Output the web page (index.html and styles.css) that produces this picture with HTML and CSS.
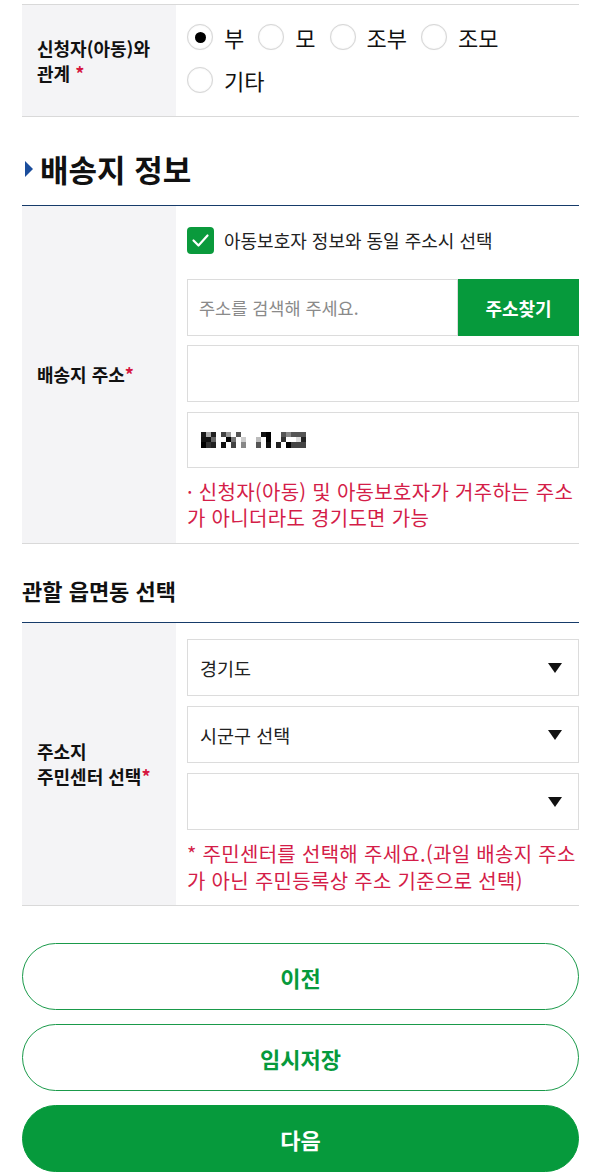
FILE: index.html
```html
<!DOCTYPE html>
<html lang="ko">
<head>
<meta charset="utf-8">
<title>배송지 정보</title>
<link rel="stylesheet" href="styles.css">
</head>
<body>
<div class="page">
  <div class="table table-top">
    <div class="row">
      <div class="th"><span class="th-text">신청자(아동)와<br>관계 <span class="req">*</span></span></div>
      <div class="td radios">
        <label class="radio"><span class="circle checked"></span>부</label>
        <label class="radio"><span class="circle"></span>모</label>
        <label class="radio"><span class="circle"></span>조부</label>
        <label class="radio"><span class="circle"></span>조모</label>
        <label class="radio"><span class="circle"></span>기타</label>
      </div>
    </div>
  </div>

  <h2 class="sec-title"><span class="tri"></span>배송지 정보</h2>

  <div class="table table-navy">
    <div class="row">
      <div class="th"><span class="th-text">배송지 주소<span class="req">*</span></span></div>
      <div class="td addr">
        <label class="check">
          <span class="box"><svg width="27" height="27" viewBox="0 0 27 27"><path d="M6.5 13.5 L11.5 18.5 L20.5 8.5" fill="none" stroke="#fff" stroke-width="2.2" stroke-linecap="round" stroke-linejoin="round"/></svg></span>
          아동보호자 정보와 동일 주소시 선택
        </label>
        <div class="search">
          <div class="field placeholder">주소를 검색해 주세요.</div>
          <div class="search-btn">주소찾기</div>
        </div>
        <div class="field"></div>
        <div class="field masked">
          <svg class="mosaic" width="106" height="16" viewBox="0 0 106 16">
            <rect x="0" y="0" width="5" height="5" fill="#1a1a1a"/><rect x="5" y="0" width="5" height="5" fill="#aaa"/><rect x="10" y="0" width="5" height="5" fill="#222"/>
            <rect x="20" y="0" width="5" height="5" fill="#444"/><rect x="25" y="0" width="5" height="5" fill="#999"/><rect x="35" y="0" width="5" height="5" fill="#555"/>
            <rect x="0" y="5" width="10" height="5" fill="#111"/><rect x="10" y="5" width="5" height="5" fill="#666"/><rect x="25" y="5" width="5" height="5" fill="#000"/>
            <rect x="30" y="5" width="5" height="5" fill="#777"/><rect x="40" y="5" width="5" height="5" fill="#ccc"/>
            <rect x="0" y="10" width="5" height="6" fill="#000"/><rect x="5" y="10" width="5" height="6" fill="#333"/><rect x="10" y="10" width="5" height="6" fill="#222"/>
            <rect x="20" y="10" width="5" height="6" fill="#111"/><rect x="30" y="10" width="5" height="6" fill="#444"/><rect x="40" y="10" width="5" height="6" fill="#888"/>
            <rect x="60" y="0" width="5" height="5" fill="#111"/><rect x="65" y="0" width="5" height="5" fill="#000"/><rect x="80" y="0" width="5" height="5" fill="#555"/><rect x="85" y="0" width="5" height="5" fill="#888"/><rect x="90" y="0" width="15" height="5" fill="#555"/>
            <rect x="55" y="5" width="5" height="5" fill="#bbb"/><rect x="65" y="5" width="5" height="5" fill="#000"/><rect x="80" y="5" width="5" height="5" fill="#333"/><rect x="95" y="5" width="5" height="5" fill="#ddd"/><rect x="100" y="5" width="5" height="5" fill="#222"/>
            <rect x="55" y="10" width="5" height="6" fill="#555"/><rect x="65" y="10" width="5" height="6" fill="#111"/><rect x="75" y="10" width="5" height="6" fill="#222"/><rect x="85" y="10" width="5" height="6" fill="#000"/><rect x="90" y="10" width="15" height="6" fill="#444"/>
          </svg>
        </div>
        <p class="note">· 신청자(아동) 및 아동보호자가 거주하는 주소가 아니더라도 경기도면 가능</p>
      </div>
    </div>
  </div>

  <h3 class="sub-title">관할 읍면동 선택</h3>

  <div class="table table-navy">
    <div class="row">
      <div class="th"><span class="th-text">주소지<br>주민센터 선택<span class="req">*</span></span></div>
      <div class="td selects">
        <div class="select"><span>경기도</span><svg width="14" height="10" viewBox="0 0 14 10"><path d="M0 0 H14 L7 10 Z" fill="#111"/></svg></div>
        <div class="select"><span>시군구 선택</span><svg width="14" height="10" viewBox="0 0 14 10"><path d="M0 0 H14 L7 10 Z" fill="#111"/></svg></div>
        <div class="select"><span></span><svg width="14" height="10" viewBox="0 0 14 10"><path d="M0 0 H14 L7 10 Z" fill="#111"/></svg></div>
        <p class="note">* 주민센터를 선택해 주세요.(과일 배송지 주소가 아닌 주민등록상 주소 기준으로 선택)</p>
      </div>
    </div>
  </div>

  <div class="buttons">
    <button class="btn btn-line" type="button">이전</button>
    <button class="btn btn-line" type="button">임시저장</button>
    <button class="btn btn-fill" type="button">다음</button>
  </div>
</div>
</body>
</html>
```

FILE: styles.css
```css
* { box-sizing: border-box; }
html, body { margin: 0; padding: 0; background: #fff; }
body {
  font-family: "Noto Sans CJK KR", "Noto Sans", sans-serif;
  color: #111;
  width: 600px;
}
.page {
  padding: 4px 21px 0 22px;
}
.table { border-top: 1px solid #d9d9d9; }
.table-navy { border-top: 1px solid #163b6a; }
.row {
  display: flex;
  align-items: stretch;
  border-bottom: 1px solid #d9d9d9;
}
.th {
  width: 154px;
  flex: none;
  background: #f4f4f6;
  display: flex;
  align-items: center;
  padding-left: 15px;
  font-size: 18px;
  font-weight: 700;
  line-height: 25px;
  color: #111;
}
.th-text { display: block; }
.req { color: #d6163f; }
.td {
  flex: 1;
  padding-left: 11px;
}

/* radios */
.radios {
  display: flex;
  flex-wrap: wrap;
  column-gap: 14px;
  row-gap: 17px;
  padding-top: 19px;
  padding-bottom: 23px;
}
.radio {
  display: flex;
  align-items: center;
  gap: 11px;
  font-size: 22px;
  line-height: 26px;
  height: 26px;
  color: #111;
}
.circle {
  width: 26px;
  height: 26px;
  border-radius: 50%;
  border: 1px solid #d6d6d6;
  box-shadow: inset 0 0 2px rgba(0,0,0,0.08), 0 0 1px rgba(0,0,0,0.08);
  background: #fff;
  display: flex;
  align-items: center;
  justify-content: center;
}
.circle.checked::after {
  content: "";
  width: 11px;
  height: 11px;
  border-radius: 50%;
  background: #000;
}

/* headings */
.sec-title {
  margin: 32px 0 16px;
  display: flex;
  align-items: center;
  font-size: 31px;
  font-weight: 700;
  line-height: 40px;
  color: #111;
}
.tri {
  width: 0;
  height: 0;
  border-top: 8px solid transparent;
  border-bottom: 8px solid transparent;
  border-left: 8px solid #1b4d9c;
  margin: 0 7px 0 3px;
}
.sub-title {
  margin: 31px 0 17px;
  font-size: 22px;
  font-weight: 700;
  line-height: 30px;
  color: #111;
}

/* address */
.addr {
  padding-top: 21px;
  padding-bottom: 12px;
  display: flex;
  flex-direction: column;
}
.check {
  display: flex;
  align-items: center;
  gap: 10px;
  font-size: 18px;
  line-height: 27px;
  color: #222;
}
.box {
  width: 27px;
  height: 27px;
  border-radius: 4px;
  background: #0a9a3c;
  display: block;
}
.box svg { display: block; }
.search {
  display: flex;
  margin-top: 25px;
}
.field {
  height: 57px;
  border: 1px solid #dcdcdc;
  background: #fff;
  margin-top: 9px;
  display: flex;
  align-items: center;
  padding-left: 11px;
  font-size: 17.5px;
}
.search .field {
  margin-top: 0;
  flex: 1;
}
.placeholder { color: #8a8a8a; }
.search-btn {
  width: 121px;
  height: 57px;
  background: #069a3c;
  color: #fff;
  font-size: 18px;
  font-weight: 700;
  display: flex;
  align-items: center;
  justify-content: center;
}
.masked { margin-top: 10px; padding-left: 13px; height: 56px; }
.mosaic { display: block; margin-top: 0; }
.note {
  margin: 11px 0 0;
  color: #d41d48;
  font-size: 20px;
  letter-spacing: 0.3px;
  line-height: 26px;
}

/* selects */
.selects {
  padding-top: 16px;
  padding-bottom: 11px;
  display: flex;
  flex-direction: column;
  gap: 10px;
}
.select {
  height: 57px;
  border: 1px solid #dcdcdc;
  display: flex;
  align-items: center;
  justify-content: space-between;
  padding: 0 16px 0 12px;
  font-size: 18.5px;
  color: #222;
}
.selects .note {
  margin-top: 0;
  line-height: 27px;
}

/* buttons */
.buttons {
  margin-top: 37px;
  display: flex;
  flex-direction: column;
  gap: 14px;
}
.btn {
  height: 67px;
  border-radius: 34px;
  font-family: inherit;
  font-size: 22px;
  font-weight: 700;
  cursor: pointer;
  width: 100%;
}
.btn-line {
  background: #fff;
  border: 1px solid #1a9a4a;
  color: #069a3c;
}
.btn-fill {
  background: #069a3c;
  border: 1px solid #069a3c;
  color: #fff;
}
```
